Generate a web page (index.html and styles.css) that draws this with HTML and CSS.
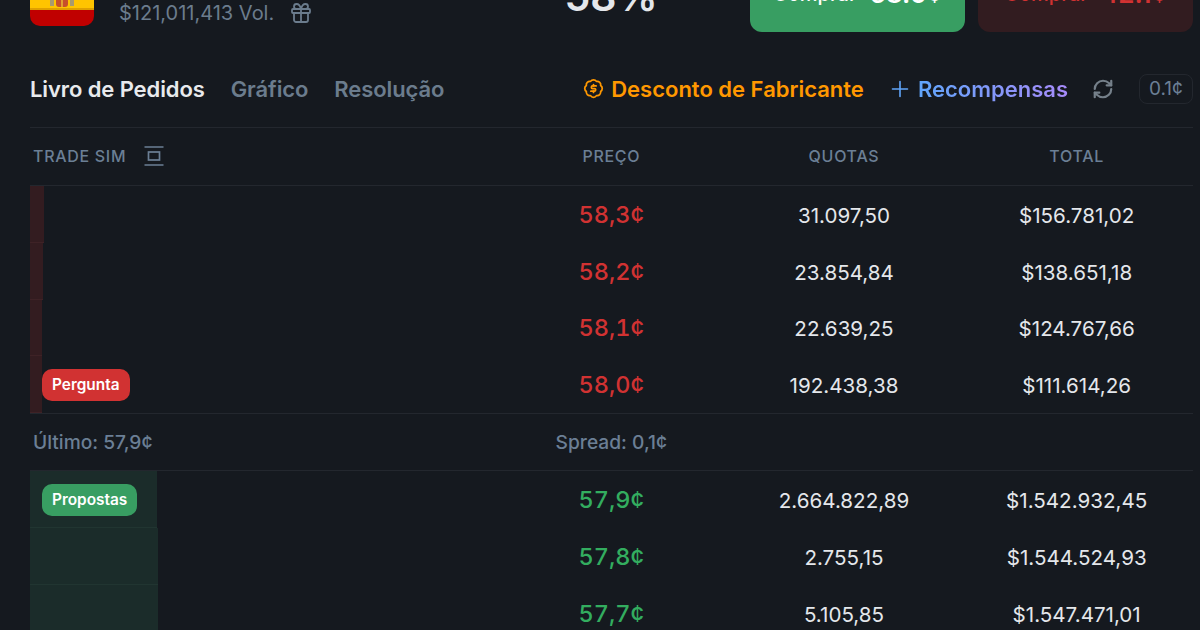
FILE: index.html
```html
<!DOCTYPE html>
<html lang="pt">
  <head>
    <meta charset="UTF-8" />
    <meta name="viewport" content="width=device-width, initial-scale=1.0" />
    <title>Livro de Pedidos</title>
    <link rel="stylesheet" href="styles.css">
  </head>
  <body>
    <div class="container">
      <div class="market">
        <div class="market-left">
          <svg class="flag" viewBox="0 0 64 64">
            <rect width="64" height="48" fill="#ffc400" />
            <rect y="47" width="64" height="17" fill="#c00000" />
            <rect y="46" width="64" height="2" fill="#e0a000" />
            <rect x="20" y="37" width="4" height="7" fill="#a89a70" />
            <rect x="40" y="37" width="4" height="7" fill="#a89a70" />
            <rect x="26" y="36" width="12" height="9" rx="3" fill="#c8502a" />
            <rect x="31" y="36" width="2" height="9" fill="#e0a030" />
          </svg>
          <div class="market-info">
            <span class="market-vol">$121,011,413 Vol.</span>
            <svg class="icon icon-gift" viewBox="0 0 24 24">
              <rect x="3" y="8" width="18" height="4" rx="1" />
              <path d="M12 8v13" />
              <path d="M19 12v7a2 2 0 0 1-2 2H7a2 2 0 0 1-2-2v-7" />
              <path d="M7.5 8a2.5 2.5 0 0 1 0-5A4.8 8 0 0 1 12 8a4.8 8 0 0 1 4.5-5 2.5 2.5 0 0 1 0 5" />
            </svg>
          </div>
        </div>
        <div class="market-chance">58%</div>
        <div class="market-buttons">
          <div class="buy buy-yes"><span>Comprar</span><strong>58.0¢</strong></div>
          <div class="buy buy-no"><span>Comprar</span><strong>42.1¢</strong></div>
        </div>
      </div>

      <div class="tabs">
        <a class="tab active">Livro de Pedidos</a>
        <a class="tab">Gráfico</a>
        <a class="tab">Resolução</a>
        <div class="tabs-right">
          <span class="promo promo-maker">
            <svg class="icon icon-coin" viewBox="0 0 24 24">
              <path d="M3.85 8.62a4 4 0 0 1 4.78-4.77 4 4 0 0 1 6.74 0 4 4 0 0 1 4.78 4.78 4 4 0 0 1 0 6.74 4 4 0 0 1-4.77 4.78 4 4 0 0 1-6.75 0 4 4 0 0 1-4.78-4.77 4 4 0 0 1 0-6.76Z" />
              <path d="M15 9h-4a1.5 1.5 0 0 0 0 3h2a1.5 1.5 0 0 1 0 3H9" />
              <path d="M12 7.5V9M12 15v1.5" />
            </svg>
            Desconto de Fabricante
          </span>
          <span class="promo promo-rewards">
            <svg class="icon icon-plus" viewBox="0 0 18 18"><path d="M9 1.5v15M1.5 9h15" /></svg>
            <span class="rewards-text">Recompensas</span>
          </span>
          <svg class="icon icon-refresh" viewBox="0 0 24 24">
            <path d="M3 12a9 9 0 0 1 9-9 9.75 9.75 0 0 1 6.74 2.74L21 8" />
            <path d="M21 3v5h-5" />
            <path d="M21 12a9 9 0 0 1-9 9 9.75 9.75 0 0 1-6.74-2.74L3 16" />
            <path d="M8 16H3v5" />
          </svg>
          <span class="tick">0.1¢</span>
        </div>
      </div>

      <div class="book">
        <div class="row head">
          <div class="cell-side">
            TRADE SIM
            <svg class="icon icon-center" viewBox="0 0 20 20">
              <path d="M0.5 1h19M0.5 19h19" />
              <rect x="4.5" y="6" width="11" height="8" />
            </svg>
          </div>
          <div>PREÇO</div>
          <div>QUOTAS</div>
          <div>TOTAL</div>
        </div>

        <div class="row">
          <div class="cell-depth"><div class="depth depth-ask" style="width: 14px"></div></div>
          <div class="price ask">58,3¢</div>
          <div>31.097,50</div>
          <div>$156.781,02</div>
        </div>
        <div class="row">
          <div class="cell-depth"><div class="depth depth-ask" style="width: 13px"></div></div>
          <div class="price ask">58,2¢</div>
          <div>23.854,84</div>
          <div>$138.651,18</div>
        </div>
        <div class="row">
          <div class="cell-depth"><div class="depth depth-ask" style="width: 12px"></div></div>
          <div class="price ask">58,1¢</div>
          <div>22.639,25</div>
          <div>$124.767,66</div>
        </div>
        <div class="row row-last">
          <div class="cell-depth">
            <div class="depth depth-ask" style="width: 12px"></div>
            <span class="badge badge-ask">Pergunta</span>
          </div>
          <div class="price ask">58,0¢</div>
          <div>192.438,38</div>
          <div>$111.614,26</div>
        </div>

        <div class="row spread">
          <div class="cell-side">Último: 57,9¢</div>
          <div class="spread-value">Spread: 0,1¢</div>
        </div>

        <div class="row">
          <div class="cell-depth">
            <div class="depth depth-bid" style="width: 127px"></div>
            <span class="badge badge-bid">Propostas</span>
          </div>
          <div class="price bid">57,9¢</div>
          <div>2.664.822,89</div>
          <div>$1.542.932,45</div>
        </div>
        <div class="row">
          <div class="cell-depth"><div class="depth depth-bid" style="width: 128px"></div></div>
          <div class="price bid">57,8¢</div>
          <div>2.755,15</div>
          <div>$1.544.524,93</div>
        </div>
        <div class="row">
          <div class="cell-depth"><div class="depth depth-bid" style="width: 128px"></div></div>
          <div class="price bid">57,7¢</div>
          <div>5.105,85</div>
          <div>$1.547.471,01</div>
        </div>
      </div>
    </div>
  </body>
</html>
```

FILE: styles.css
```css
html,
body {
  height: 100%;
}
body {
  font-family: Inter, "Noto Sans", sans-serif;
  background-color: #15191f;
  color: #e4e7eb;
  margin: 0;
  padding: 0;
  overflow: hidden;
}
.container {
  margin-top: -38px;
  padding: 0 7px 0 30px;
}
.icon {
  fill: none;
  stroke: currentColor;
  stroke-width: 2;
  stroke-linecap: round;
  stroke-linejoin: round;
  flex-shrink: 0;
}

/* market header, cut off by the top of the window */
.market {
  display: grid;
  grid-template-columns: 465px 232px 1fr;
  height: 71px;
}
.market-left {
  display: flex;
  align-items: flex-start;
  gap: 25px;
}
.flag {
  width: 64px;
  height: 64px;
  border-radius: 10px;
  display: block;
}
.market-info {
  display: flex;
  align-items: center;
  gap: 15px;
  margin-top: 38px;
  height: 26px;
  color: #6b7c8d;
  font-size: 20px;
}
.icon-gift {
  width: 24px;
  height: 24px;
  stroke-width: 1.8;
}
.market-chance {
  padding-top: 10px;
  text-align: center;
  font-size: 41px;
  font-weight: 600;
  line-height: 48px;
  color: #e4e7eb;
}
.market-buttons {
  display: grid;
  grid-template-columns: 1fr 1fr;
  gap: 13px;
  margin-left: 23px;
  height: 70px;
}
.buy {
  display: flex;
  align-items: center;
  justify-content: center;
  gap: 13px;
  border-radius: 12px;
  padding-bottom: 7px;
  box-sizing: border-box;
  font-size: 20px;
  font-weight: 500;
}
.buy strong {
  font-size: 26px;
  font-weight: 600;
}
.buy-yes {
  background-color: #389e62;
  color: #fff;
}
.buy-no {
  background-color: #321c20;
  color: #d13232;
}

/* tabs */
.tabs {
  display: flex;
  align-items: center;
  gap: 26px;
  height: 95px;
  border-bottom: 1px solid #23272e;
  font-size: 22px;
  font-weight: 600;
  letter-spacing: -0.1px;
  box-sizing: border-box;
  padding-top: 17px;
}
.tab {
  color: #6b7c8d;
}
.tab.active {
  color: #e8eaed;
}
.tabs-right {
  display: flex;
  align-items: center;
  margin-left: auto;
  letter-spacing: 0;
}
.promo {
  display: flex;
  align-items: center;
}
.promo-maker {
  gap: 7px;
  color: #ff9800;
}
.icon-coin {
  width: 21px;
  height: 21px;
}
.promo-rewards {
  gap: 9px;
  margin-left: 27px;
}
.icon-plus {
  width: 18px;
  height: 18px;
  color: #60a5fa;
  stroke-width: 1.6;
}
.rewards-text {
  background: linear-gradient(90deg, #60a5fa, #a78bfa);
  -webkit-background-clip: text;
  background-clip: text;
  color: transparent;
}
.icon-refresh {
  width: 22px;
  height: 22px;
  margin-left: 24px;
  color: #75808a;
  stroke-width: 2.4;
}
.tick {
  margin-left: 25px;
  width: 54px;
  height: 30px;
  box-sizing: border-box;
  border: 1px solid #23272e;
  border-radius: 8px;
  color: #6b7f95;
  font-size: 19px;
  font-weight: 400;
  line-height: 28px;
  text-align: center;
}

/* order book */
.row {
  display: grid;
  grid-template-columns: 465px 1fr 1fr 1fr;
  align-items: center;
  height: 56.75px;
  text-align: center;
  font-size: 20.6px;
}
.row > div + div {
  padding-top: 2px;
}
.head {
  height: 58px;
  border-bottom: 1px solid #23272e;
  box-sizing: border-box;
  padding-bottom: 2px;
  color: #6b7f95;
  font-size: 16px;
  font-weight: 500;
  letter-spacing: 0.7px;
}
.row-last {
  border-bottom: 1px solid #23272e;
}
.cell-side {
  display: flex;
  align-items: center;
  gap: 18px;
  padding-left: 3px;
  text-align: left;
}
.icon-center {
  width: 20px;
  height: 20px;
  stroke-width: 1.7;
  stroke-linecap: butt;
  stroke-linejoin: miter;
}
.cell-depth {
  position: relative;
  align-self: stretch;
}
.depth {
  height: 100%;
  box-sizing: border-box;
  border-bottom: 1px solid transparent;
}
.depth-ask {
  background-color: #331c20;
  border-bottom-color: #3e2226;
}
.depth-bid {
  background-color: #1b2c2a;
  border-bottom-color: #213531;
}
.badge {
  position: absolute;
  left: 12px;
  top: 12.5px;
  padding: 0 10px;
  height: 32px;
  line-height: 32px;
  border-radius: 10px;
  color: #fff;
  font-size: 15.4px;
  font-weight: 600;
}
.badge-ask {
  background-color: #d13232;
}
.badge-bid {
  background-color: #389e62;
}
.row > .price {
  padding-top: 0;
  font-size: 23.5px;
  font-weight: 500;
  font-variant-numeric: tabular-nums;
}
.ask {
  color: #d13232;
}
.bid {
  color: #33ad5f;
}
.spread {
  height: 56.4px;
  border-bottom: 1px solid #23272e;
  color: #6b7f95;
  font-size: 19.2px;
  font-weight: 500;
}
.row.spread > div + div,
.row.head > div + div {
  padding-top: 0;
}
.spread-value {
  white-space: nowrap;
}
```
